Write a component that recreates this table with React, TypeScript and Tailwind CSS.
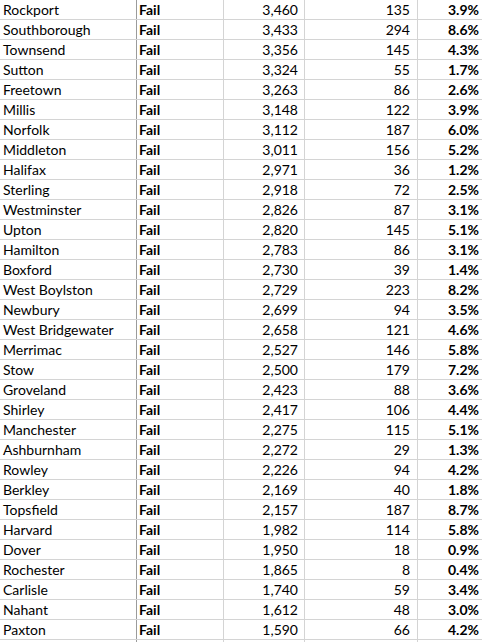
const rows: [string, string, string, string][] = [
  ["Rockport", "3,460", "135", "3.9%"],
  ["Southborough", "3,433", "294", "8.6%"],
  ["Townsend", "3,356", "145", "4.3%"],
  ["Sutton", "3,324", "55", "1.7%"],
  ["Freetown", "3,263", "86", "2.6%"],
  ["Millis", "3,148", "122", "3.9%"],
  ["Norfolk", "3,112", "187", "6.0%"],
  ["Middleton", "3,011", "156", "5.2%"],
  ["Halifax", "2,971", "36", "1.2%"],
  ["Sterling", "2,918", "72", "2.5%"],
  ["Westminster", "2,826", "87", "3.1%"],
  ["Upton", "2,820", "145", "5.1%"],
  ["Hamilton", "2,783", "86", "3.1%"],
  ["Boxford", "2,730", "39", "1.4%"],
  ["West Boylston", "2,729", "223", "8.2%"],
  ["Newbury", "2,699", "94", "3.5%"],
  ["West Bridgewater", "2,658", "121", "4.6%"],
  ["Merrimac", "2,527", "146", "5.8%"],
  ["Stow", "2,500", "179", "7.2%"],
  ["Groveland", "2,423", "88", "3.6%"],
  ["Shirley", "2,417", "106", "4.4%"],
  ["Manchester", "2,275", "115", "5.1%"],
  ["Ashburnham", "2,272", "29", "1.3%"],
  ["Rowley", "2,226", "94", "4.2%"],
  ["Berkley", "2,169", "40", "1.8%"],
  ["Topsfield", "2,157", "187", "8.7%"],
  ["Harvard", "1,982", "114", "5.8%"],
  ["Dover", "1,950", "18", "0.9%"],
  ["Rochester", "1,865", "8", "0.4%"],
  ["Carlisle", "1,740", "59", "3.4%"],
  ["Nahant", "1,612", "48", "3.0%"],
  ["Paxton", "1,590", "66", "4.2%"],
];

interface RowProps {
  town: string;
  result: string;
  pop: string;
  count: string;
  pct: string;
}

const Row = ({ town, result, pop, count, pct }: RowProps) => (
  <div className="flex h-[20px] border-b border-[#d4d4d4]">
    <div className="w-[137px] shrink-0 border-r border-[#9b9b9b] pl-[3px] pt-[1px] leading-[18px]">{town}</div>
    <div className="w-[87px] shrink-0 border-r border-[#d4d4d4] pl-[2px] pt-[1px] font-bold leading-[18px]">{result}</div>
    <div className="w-[81px] shrink-0 border-r border-[#d4d4d4] pr-[6px] pt-[1px] text-right leading-[18px]">{pop}</div>
    <div className="w-[113px] shrink-0 border-r border-[#d4d4d4] pr-[7px] pt-[1px] text-right leading-[18px]">{count}</div>
    <div className="w-[64px] shrink-0 pr-[3px] pt-[1px] text-right font-bold leading-[18px]">{pct}</div>
  </div>
);

export default function App() {
  return (
    <div className="h-[642px] w-[482px] overflow-hidden bg-white text-[14px] text-black [font-family:Lato,'Open_Sans',sans-serif]">
      {rows.map(([town, pop, count, pct]) => (
        <Row key={town} town={town} result="Fail" pop={pop} count={count} pct={pct} />
      ))}
      {/* partial row peeking in at the bottom */}
      <Row town="" result="" pop="" count="" pct="" />
    </div>
  );
}
